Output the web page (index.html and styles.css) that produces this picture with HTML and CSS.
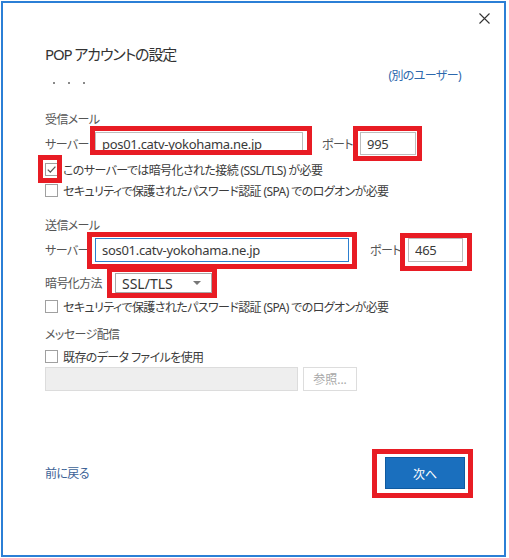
FILE: index.html
```html
<!DOCTYPE html>
<html lang="ja">
<head>
    <meta charset="UTF-8">
    <meta name="viewport" content="width=device-width, initial-scale=1.0">
    <title>POP アカウントの設定</title>
    <link rel="stylesheet" href="styles.css">
</head>
<body>
    <div class="dialog">
        <div class="topbar">
            <button class="close" aria-label="閉じる">
                <svg width="11" height="11" viewBox="0 0 11 11"><path d="M0.5 0.5 L10.5 10.5 M10.5 0.5 L0.5 10.5" stroke="#333" stroke-width="1.1" fill="none"/></svg>
            </button>
        </div>

        <div class="content">
            <h1 class="title">POP アカウントの設定</h1>

            <div class="subhead">
                <div class="dots"><span></span><span></span><span></span></div>
                <a class="link" href="#">(別のユーザー)</a>
            </div>

            <!-- 受信 -->
            <div class="section-label in-label">受信メール</div>
            <div class="row row-in">
                <label class="lbl">サーバー</label>
                <input class="field server1" type="text" value="pos01.catv-yokohama.ne.jp">
                <label class="lbl port-lbl">ポート</label>
                <input class="field port" type="text" value="995">
            </div>
            <div class="check check1">
                <span class="box">
                    <svg width="11" height="11" viewBox="0 0 11 11"><path d="M1.8 5.6 L4.3 8.1 L9.4 2.6" stroke="#5a5a5a" stroke-width="1.3" fill="none"/></svg>
                </span>
                このサーバーでは暗号化された接続 (SSL/TLS) が必要
            </div>
            <div class="check">
                <span class="box"></span>
                セキュリティで保護されたパスワード認証 (SPA) でのログオンが必要
            </div>

            <!-- 送信 -->
            <div class="section-label out-label">送信メール</div>
            <div class="row row-out">
                <label class="lbl">サーバー</label>
                <input class="field server2 focus" type="text" value="sos01.catv-yokohama.ne.jp">
                <label class="lbl port-lbl2">ポート</label>
                <input class="field port2" type="text" value="465">
            </div>
            <div class="row row-enc">
                <label class="lbl enc-lbl">暗号化方法</label>
                <div class="select">
                    <span>SSL/TLS</span>
                    <svg width="8" height="4" viewBox="0 0 8 4"><path d="M0 0 H8 L4 4 Z" fill="#777"/></svg>
                </div>
            </div>
            <div class="check check3">
                <span class="box"></span>
                セキュリティで保護されたパスワード認証 (SPA) でのログオンが必要
            </div>

            <!-- 配信 -->
            <div class="section-label deliv-label">メッセージ配信</div>
            <div class="check check4">
                <span class="box"></span>
                既存のデータ ファイルを使用
            </div>
            <div class="row row-file">
                <div class="file-path"></div>
                <button class="browse" disabled>参照...</button>
            </div>

            <div class="footer">
                <a class="back" href="#">前に戻る</a>
                <button class="next">次へ</button>
            </div>
        </div>

        <!-- 赤い枠 (注釈) -->
        <div class="mark m-server1"></div>
        <div class="mark m-port1"></div>
        <div class="mark m-check1"></div>
        <div class="mark m-server2"></div>
        <div class="mark m-port2"></div>
        <div class="mark m-enc"></div>
        <div class="mark m-next"></div>
    </div>
</body>
</html>
```

FILE: styles.css
```css
/* 全体 */
body {
    margin: 0;
    background-color: #ffffff;
    font-family: "Noto Sans", "Noto Sans CJK JP", sans-serif;
    font-feature-settings: "palt";
    color: #444444;
    font-size: 12px;
    letter-spacing: -0.6px;
}

.dialog {
    position: relative;
    box-sizing: border-box;
    width: 505px;
    height: 556px;
    margin: 1px 0 0 1px;
    border: 2px solid #2b7fd6;
    background-color: #ffffff;
}

.topbar {
    display: flex;
    justify-content: flex-end;
    height: 30px;
    padding: 7px 12px 0 0;
    box-sizing: border-box;
}

.close {
    width: 16px;
    height: 16px;
    padding: 0;
    border: none;
    background: none;
    display: flex;
    align-items: center;
    justify-content: center;
}

.content {
    padding: 0 40px 0 42px;
}

.title {
    margin: 9px 0 0 0;
    height: 24px;
    font-size: 15px;
    letter-spacing: -1.1px;
    font-weight: normal;
    line-height: 24px;
    color: #333333;
}

/* 進捗の点と別ユーザー */
.subhead {
    display: flex;
    justify-content: space-between;
    height: 20px;
    line-height: 20px;
}

.dots {
    display: flex;
    align-items: flex-start;
    gap: 13px;
    padding: 16px 0 0 8px;
}

.dots span {
    width: 2px;
    height: 2px;
    background-color: #8a8a8a;
}

.link {
    color: #2d68ad;
    text-decoration: none;
    margin-right: 3px;
}

.section-label {
    height: 20px;
    line-height: 20px;
    color: #555555;
}

.in-label {
    margin-top: 24px;
}

.out-label {
    margin-top: 15px;
}

.deliv-label {
    margin-top: 8px;
}

.row {
    display: flex;
    align-items: center;
}

.lbl {
    flex-shrink: 0;
    width: 50px;
    white-space: nowrap;
    color: #555555;
}

.field {
    box-sizing: border-box;
    flex-shrink: 0;
    height: 23px;
    padding: 0 6px;
    border: 1px solid #bdbdbd;
    font-family: "Noto Sans", sans-serif;
    font-size: 13px;
    letter-spacing: -0.3px;
    color: #3a3a3a;
    outline: none;
}

.row-in {
    margin-top: 2px;
}

.server1 {
    width: 208px;
}

.port-lbl {
    width: 38px;
    margin-left: 19px;
}

.port {
    width: 56px;
}

.row-out {
    margin-top: 2px;
}

.server2 {
    width: 254px;
    height: 24px;
}

.focus {
    border-color: #2c7fd0;
}

.port-lbl2 {
    width: 38px;
    margin-left: 21px;
}

.port2 {
    width: 55px;
    height: 24px;
}

/* チェックボックス */
.check {
    display: flex;
    align-items: center;
    gap: 5px;
    height: 21px;
    white-space: nowrap;
    color: #3c3c3c;
}

.check1 {
    margin-top: 4px;
}

.check3 {
    margin-top: 3px;
}

.check4 {
    margin-top: 1px;
}

.box {
    box-sizing: border-box;
    flex-shrink: 0;
    width: 13px;
    height: 13px;
    border: 1px solid #a0a0a0;
    background-color: #ffffff;
    display: flex;
    align-items: center;
    justify-content: center;
}

/* 暗号化方法 */
.row-enc {
    margin-top: 11px;
}

.enc-lbl {
    width: 70px;
}

.select {
    box-sizing: border-box;
    width: 97px;
    height: 20px;
    border: 1px solid #a8a8a8;
    padding: 0 10px 0 6px;
    display: flex;
    align-items: center;
    justify-content: space-between;
    font-family: "Noto Sans", sans-serif;
    font-size: 14px;
    letter-spacing: 0;
    color: #333333;
}

/* ファイル */
.row-file {
    gap: 5px;
}

.file-path {
    box-sizing: border-box;
    width: 253px;
    height: 24px;
    background-color: #eeeeee;
    border: 1px solid #dcdcdc;
}

.browse {
    box-sizing: border-box;
    width: 54px;
    height: 24px;
    border: 1px solid #dddddd;
    background-color: #ffffff;
    color: #a8a8a8;
    font-family: "Noto Sans", "Noto Sans CJK JP", sans-serif;
    font-size: 12px;
    padding: 0;
}

/* 下部 */
.footer {
    display: flex;
    justify-content: space-between;
    align-items: center;
    margin-top: 66px;
    margin-right: -1px;
}

.back {
    color: #3c6296;
    text-decoration: none;
}

.next {
    box-sizing: border-box;
    width: 80px;
    height: 32px;
    background-color: #1a6fbe;
    border: 1px solid #0f5aa0;
    color: #ffffff;
    font-family: "Noto Sans CJK JP", sans-serif;
    font-size: 12px;
}

/* 赤い注釈の枠 */
.mark {
    position: absolute;
    box-sizing: border-box;
    border: 5px solid #e81c24;
}

.m-server1 { left: 87px; top: 123px; width: 222px; height: 29px; }
.m-port1   { left: 350px; top: 123px; width: 69px; height: 35px; }
.m-check1  { left: 35px; top: 152px; width: 24px; height: 28px; }
.m-server2 { left: 84px; top: 229px; width: 270px; height: 37px; }
.m-port2   { left: 397px; top: 230px; width: 72px; height: 38px; }
.m-enc     { left: 104px; top: 264px; width: 110px; height: 31px; }
.m-next    { left: 369px; top: 446px; width: 101px; height: 49px; }
```
